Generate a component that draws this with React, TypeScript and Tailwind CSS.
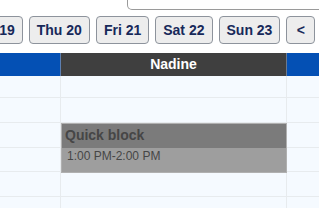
const days = ["Wed 19", "Thu 20", "Fri 21", "Sat 22", "Sun 23"];
const rows = [22, 25, 25, 24, 25, 25, 25];

export default function App() {
    return (
        <div className="w-[319px] h-[208px] overflow-hidden bg-white font-['Liberation_Sans',Arial,sans-serif]">
            <div className="flex justify-end">
                <div className="w-[200px] h-[10px] mr-[-8px] bg-white border border-t-0 border-[#9a9a9a] rounded-bl-[5px]" />
            </div>
            <div className="flex gap-[6px] mt-[6px] ml-[-42px] whitespace-nowrap">
                {days.map((d) => (
                    <button
                        key={d}
                        className="h-[28px] px-[7px] bg-[#ededed] border border-[#8d939c] rounded-[4px] text-[14px] font-bold text-[#17295a]"
                    >
                        {d}
                    </button>
                ))}
                <button className="h-[28px] w-[29px] bg-[#ededed] border border-[#8d939c] rounded-[4px] text-[14px] font-bold text-[#17295a]">
                    &lt;
                </button>
            </div>
            <div className="relative mt-[9px]">
                <div className="flex h-[23px]">
                    <div className="w-[61px] bg-[#0450b4] border-r border-[#5d7fb0]" />
                    <div className="w-[226px] bg-[#3f3f3f] border-r border-[#6a7a90] flex items-center justify-center text-white font-bold text-[14px]">
                        Nadine
                    </div>
                    <div className="flex-1 bg-[#0450b4]" />
                </div>
                <div className="flex bg-[#f5faff]">
                    <div className="w-[61px] border-r border-[#e7ebee]">
                        {rows.map((h, i) => (
                            <div key={i} className="border-b border-[#e7ebee]" style={{ height: h }} />
                        ))}
                    </div>
                    <div className="w-[226px] border-r border-[#e7ebee]">
                        {rows.map((h, i) => (
                            <div key={i} className="border-b border-[#e7ebee]" style={{ height: h }} />
                        ))}
                    </div>
                    <div className="flex-1">
                        {rows.map((h, i) => (
                            <div key={i} className="border-b border-[#e7ebee]" style={{ height: h }} />
                        ))}
                    </div>
                </div>
                <div className="absolute left-[61px] top-[70px] w-[226px] h-[50px] border border-[#b0b0b0] bg-[#9e9e9e] text-[#464646]">
                    <div className="h-[24px] bg-[#7b7b7b] pl-[3px] pt-[3px] font-bold text-[14px] leading-[16px]">Quick block</div>
                    <div className="pl-[5px] pt-[1px] text-[12px] leading-[14px]">1:00 PM-2:00 PM</div>
                </div>
            </div>
        </div>
    );
}
